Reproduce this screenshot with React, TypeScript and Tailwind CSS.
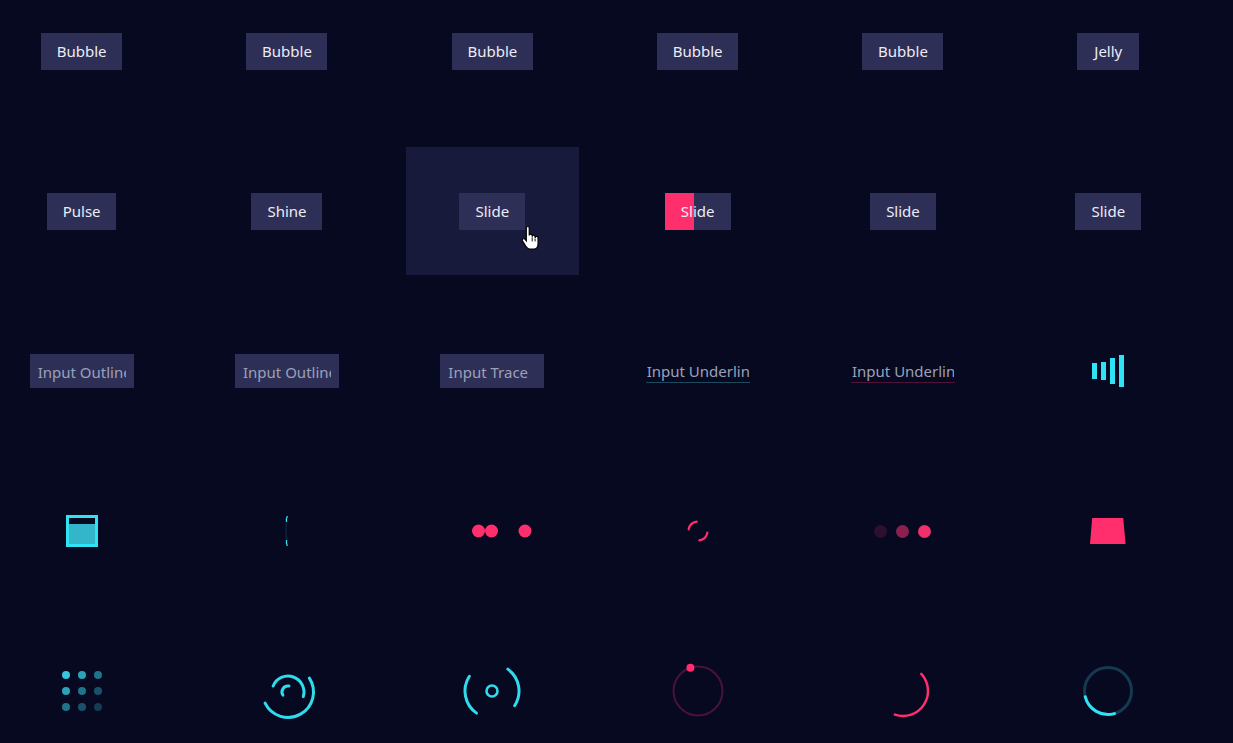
import type { ReactNode } from "react";

const CYAN = "#2ee3f3";
const PINK = "#ff2f6e";

// svg arc path, angles in degrees, clockwise on screen
function arc(cx: number, cy: number, r: number, a0: number, a1: number) {
  const rad = (d: number) => (d * Math.PI) / 180;
  const x0 = cx + r * Math.cos(rad(a0));
  const y0 = cy + r * Math.sin(rad(a0));
  const x1 = cx + r * Math.cos(rad(a1));
  const y1 = cy + r * Math.sin(rad(a1));
  const large = a1 - a0 > 180 ? 1 : 0;
  return `M ${x0.toFixed(2)} ${y0.toFixed(2)} A ${r} ${r} 0 ${large} 1 ${x1.toFixed(2)} ${y1.toFixed(2)}`;
}

function Btn({ label, w }: { label: string; w: string }) {
  return (
    <div className={`flex h-[37px] items-center justify-center bg-[#2e2f57] pt-[1px] text-[15px] text-[#ececf4] ${w}`}>
      {label}
    </div>
  );
}

function SlideFill() {
  return (
    <div className="relative flex h-[37px] w-[66px] items-center justify-center overflow-hidden bg-[#2e2f57] pt-[1px] text-[15px] text-[#ececf4]">
      <div className="absolute inset-y-0 left-0 w-[29px] bg-[#ff2f6e]" />
      <span className="relative">Slide</span>
    </div>
  );
}

function OutlineInput({ value }: { value: string }) {
  return (
    <input
      readOnly
      value={value}
      className="h-[34px] w-[104px] bg-[#2e2f57] px-2 pt-[1px] text-[15px] text-[#9ba1b9] outline-none"
    />
  );
}

function UnderlineInput({ line }: { line: string }) {
  return (
    <input
      readOnly
      value="Input Underline"
      className={`h-[24px] w-[104px] border-b bg-transparent px-[1px] pt-[1px] text-[15px] text-[#9ba1b9] outline-none ${line}`}
    />
  );
}

function Bars() {
  return (
    <div className="flex items-center gap-[4px]">
      <div className="h-[16px] w-[5px] bg-[#2ee3f3]" />
      <div className="h-[18px] w-[5px] bg-[#2ee3f3]" />
      <div className="h-[26px] w-[5px] bg-[#2ee3f3]" />
      <div className="h-[32px] w-[5px] bg-[#2ee3f3]" />
    </div>
  );
}

function FillBox() {
  return (
    <div className="flex h-[32px] w-[32px] flex-col justify-end border-[3px] border-[#2ee3f3]">
      <div className="h-[20px] w-full bg-[#33b6c9]" />
    </div>
  );
}

function EdgeRing() {
  return (
    <svg width="8" height="32" viewBox="0 0 8 32">
      <path d="M3.4 8 Q2.6 16 3.4 24" stroke="#10283f" strokeWidth="1.2" fill="none" />
      <path d="M4.4 1 Q3 3.5 3.5 7" stroke={CYAN} strokeWidth="1.3" fill="none" />
      <path d="M4.4 31 Q3 28.5 3.5 25" stroke={CYAN} strokeWidth="1.3" fill="none" />
    </svg>
  );
}

function PinkDots() {
  return (
    <svg width="80" height="14" viewBox="0 0 80 14">
      <circle cx="26.5" cy="7" r="6.5" fill={PINK} />
      <circle cx="39.5" cy="7" r="6.5" fill={PINK} />
      <circle cx="73" cy="7" r="6.5" fill={PINK} />
    </svg>
  );
}

function SmallSpinner() {
  return (
    <svg width="24" height="24" viewBox="0 0 24 24">
      <path d={arc(12, 12, 9.5, 190, 262)} stroke={PINK} strokeWidth="2.2" fill="none" strokeLinecap="round" />
      <path d={arc(12, 12, 9.5, 10, 82)} stroke={PINK} strokeWidth="2.2" fill="none" strokeLinecap="round" />
    </svg>
  );
}

function FadeDots() {
  return (
    <div className="flex items-center gap-[9px]">
      <div className="h-[13px] w-[13px] rounded-full bg-[#2e0f2e]" />
      <div className="h-[13px] w-[13px] rounded-full bg-[#8c1f4e]" />
      <div className="h-[13px] w-[13px] rounded-full bg-[#f02f6b]" />
    </div>
  );
}

function Trapezoid() {
  return (
    <svg width="36" height="26" viewBox="0 0 36 26">
      <polygon points="2.2,0 33.2,0 35.6,26 0,26" fill={PINK} />
    </svg>
  );
}

function DotGrid() {
  const shades = [
    ["bg-[#34c6da]", "bg-[#2aa3b8]", "bg-[#1f7489]"],
    ["bg-[#2aa3b8]", "bg-[#1f7489]", "bg-[#185169]"],
    ["bg-[#1f7489]", "bg-[#185169]", "bg-[#153c55]"],
  ];
  return (
    <div className="grid grid-cols-3 gap-[8px]">
      {shades.flat().map((c, i) => (
        <div key={i} className={`h-[8px] w-[8px] rounded-full ${c}`} />
      ))}
    </div>
  );
}

function TripleArc() {
  return (
    <svg width="60" height="60" viewBox="0 0 60 60" className="translate-x-[1px] translate-y-[1px]">
      <g stroke="#2fdcee" strokeWidth="3" fill="none" strokeLinecap="round">
        <path d={arc(30, 30, 25.5, -33, 154)} />
        <path d={arc(30, 30, 16, -158, 17)} />
        <path d={arc(30, 30, 6, 149, 279)} />
      </g>
    </svg>
  );
}

function Brackets() {
  return (
    <svg width="64" height="64" viewBox="0 0 64 64">
      <g stroke="#2fdcee" strokeWidth="3" fill="none" strokeLinecap="round">
        <path d={arc(32, 32, 27, 125, 213)} />
        <path d={arc(32, 32, 27, -54, 33)} />
        <circle cx="32" cy="32" r="5.5" strokeWidth="2.6" />
      </g>
    </svg>
  );
}

function OrbitDot() {
  const a = (-108 * Math.PI) / 180;
  return (
    <svg width="60" height="60" viewBox="0 0 60 60">
      <circle cx="30" cy="30" r="24.5" stroke="#4a1239" strokeWidth="2" fill="none" />
      <circle cx={30 + 24.5 * Math.cos(a)} cy={30 + 24.5 * Math.sin(a)} r="4" fill={PINK} />
    </svg>
  );
}

function PinkArc() {
  return (
    <svg width="60" height="60" viewBox="0 0 60 60">
      <path d={arc(30, 30, 25, -43, 109)} stroke={PINK} strokeWidth="2.5" fill="none" strokeLinecap="round" />
    </svg>
  );
}

function TrackRing() {
  return (
    <svg width="60" height="60" viewBox="0 0 60 60">
      <circle cx="30" cy="30" r="23.5" stroke="#153a50" strokeWidth="3" fill="none" />
      <path d={arc(30, 30, 23.5, 74, 166)} stroke={CYAN} strokeWidth="3" fill="none" strokeLinecap="round" />
    </svg>
  );
}

function HandCursor() {
  return (
    <svg width="20" height="27" viewBox="0 0 17 23" className="absolute left-[115px] top-[78px]">
      <path
        d="M4.5 2.5 a1.25 1.25 0 0 1 2.5 0 V9 a1.25 1.25 0 0 1 2.5 0 V10 a1.25 1.25 0 0 1 2.5 0 V11 a1.25 1.25 0 0 1 2.5 0 V16 c0 2.5 -1.5 4.5 -3.5 4.5 H7.5 c-1.5 0 -2.5 -1 -3.5 -2.5 L1.2 13.5 a1.3 1.3 0 0 1 2.1 -1.5 L4.5 13.5 Z"
        fill="#fff"
        stroke="#000"
        strokeWidth="1"
      />
      <path d="M9.5 10.5 V14 M12 11.5 V14" stroke="#000" strokeWidth="0.8" />
    </svg>
  );
}

type Cell = { node: ReactNode; hover?: boolean };

export default function App() {
  const cells: Cell[] = [
    { node: <Btn label="Bubble" w="w-[81px]" /> },
    { node: <Btn label="Bubble" w="w-[81px]" /> },
    { node: <Btn label="Bubble" w="w-[81px]" /> },
    { node: <Btn label="Bubble" w="w-[81px]" /> },
    { node: <Btn label="Bubble" w="w-[81px]" /> },
    { node: <Btn label="Jelly" w="w-[62px]" /> },

    { node: <Btn label="Pulse" w="w-[69px]" /> },
    { node: <Btn label="Shine" w="w-[71px]" /> },
    {
      node: (
        <>
          <Btn label="Slide" w="w-[66px]" />
          <HandCursor />
        </>
      ),
      hover: true,
    },
    { node: <SlideFill /> },
    { node: <Btn label="Slide" w="w-[66px]" /> },
    { node: <Btn label="Slide" w="w-[66px]" /> },

    { node: <OutlineInput value="Input Outline" /> },
    { node: <OutlineInput value="Input Outline" /> },
    { node: <OutlineInput value="Input Trace" /> },
    { node: <UnderlineInput line="border-[#1b4a5e]" /> },
    { node: <UnderlineInput line="border-[#4f1238]" /> },
    { node: <Bars /> },

    { node: <FillBox /> },
    { node: <EdgeRing /> },
    { node: <PinkDots /> },
    { node: <SmallSpinner /> },
    { node: <FadeDots /> },
    { node: <Trapezoid /> },

    { node: <DotGrid /> },
    { node: <TripleArc /> },
    { node: <Brackets /> },
    { node: <OrbitDot /> },
    { node: <PinkArc /> },
    { node: <TrackRing /> },
  ];

  return (
    <div
      className="h-screen overflow-hidden bg-[#070921]"
      style={{ fontFamily: '"Noto Sans", "Open Sans", sans-serif' }}
    >
      <div className="-ml-[21px] -mt-[13px] grid w-[1232px] grid-cols-[repeat(6,205.33px)] auto-rows-[128px] gap-y-8">
        {cells.map((c, i) => (
          <div key={i} className="flex items-center justify-center">
            <div
              className={`relative flex h-[128px] w-[173px] items-center justify-center ${
                c.hover ? "bg-[#181a3b]" : ""
              }`}
            >
              {c.node}
            </div>
          </div>
        ))}
      </div>
    </div>
  );
}
